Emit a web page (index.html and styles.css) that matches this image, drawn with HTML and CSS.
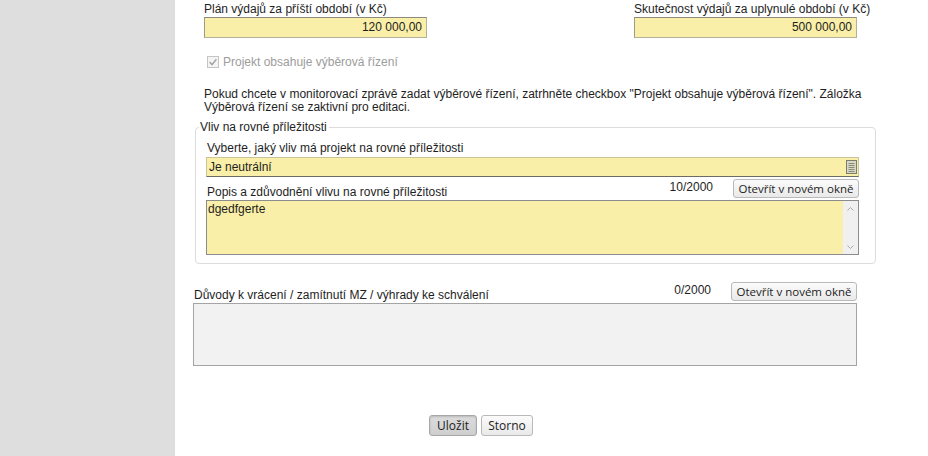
FILE: index.html
```html
<!DOCTYPE html>
<html lang="cs">
<head>
<meta charset="utf-8">
<title>Monitorovací zpráva</title>
<link rel="stylesheet" href="styles.css">
</head>
<body>
<div class="page">
  <aside class="side"></aside>
  <main class="main">
    <div class="top-row">
      <div class="field">
        <div class="lbl">Plán výdajů za příští období (v Kč)</div>
        <div class="money">120 000,00</div>
      </div>
      <div class="field">
        <div class="lbl">Skutečnost výdajů za uplynulé období (v Kč)</div>
        <div class="money">500 000,00</div>
      </div>
    </div>

    <div class="check">
      <span class="box"><svg width="12" height="12" viewBox="0 0 12 12"><rect x="0.5" y="0.5" width="11" height="11" fill="#f4f4f4" stroke="#c4c4c4"/><path d="M2.6 6.1 L5 8.6 L9.4 3.2" fill="none" stroke="#a2a2a2" stroke-width="1.4"/></svg></span>
      <span class="check-lbl">Projekt obsahuje výběrová řízení</span>
    </div>

    <p class="note">Pokud chcete v monitorovací zprávě zadat výběrové řízení, zatrhněte checkbox "Projekt obsahuje výběrová řízení". Záložka Výběrová řízení se zaktivní pro editaci.</p>

    <fieldset class="group">
      <legend>Vliv na rovné příležitosti</legend>
      <div class="lbl in">Vyberte, jaký vliv má projekt na rovné příležitosti</div>
      <div class="select">
        <span>Je neutrální</span>
        <svg class="sel-ico" width="11" height="14" viewBox="0 0 11 14"><rect x="0.5" y="0.5" width="10" height="13" fill="#d8d8c8" stroke="#7d7d6a"/><path d="M2.5 3.5h6M2.5 5.5h6M2.5 7.5h6M2.5 9.5h6M2.5 11.5h6" stroke="#8a8a78" stroke-width="1"/></svg>
      </div>
      <div class="lbl-row">
        <span class="row-lbl">Popis a zdůvodnění vlivu na rovné příležitosti</span>
        <span class="count">10/2000</span>
        <button class="btn open">Otevřít v novém okně</button>
      </div>
      <div class="area yellow">
        <span class="area-text">dgedfgerte</span>
        <div class="scroll">
          <svg width="7" height="4" viewBox="0 0 7 4"><path d="M0.5 3.5 L3.5 0.5 L6.5 3.5" fill="none" stroke="#a8a8a8"/></svg>
          <svg width="7" height="4" viewBox="0 0 7 4"><path d="M0.5 0.5 L3.5 3.5 L6.5 0.5" fill="none" stroke="#a8a8a8"/></svg>
        </div>
      </div>
    </fieldset>

    <div class="lbl-row outer">
      <span class="row-lbl">Důvody k vrácení / zamítnutí MZ / výhrady ke schválení</span>
      <span class="count">0/2000</span>
      <button class="btn open">Otevřít v novém okně</button>
    </div>
    <div class="area gray"></div>

    <div class="actions">
      <button class="btn act pressed">Uložit</button>
      <button class="btn act">Storno</button>
    </div>
  </main>
</div>
</body>
</html>
```

FILE: styles.css
```css
html, body {
  margin: 0;
  padding: 0;
  background: #ffffff;
}

body {
  font-family: "Liberation Sans", Arial, sans-serif;
  font-size: 12px;
  color: #1e1e1e;
}

.page {
  display: flex;
  width: 928px;
  height: 456px;
  overflow: hidden;
}

.side {
  width: 175px;
  flex: none;
  background: #dedede;
}

.main {
  flex: none;
  width: 664px;
  padding: 2px 0 0 18px;
}

.top-row {
  display: flex;
  justify-content: space-between;
  padding-left: 11px;
}

.field {
  width: 223px;
}

.lbl {
  line-height: 15px;
  white-space: nowrap;
}

.money {
  box-sizing: border-box;
  height: 21px;
  background: #f9efa8;
  border: 1px solid #b4b09a;
  border-top-color: #8c8a7c;
  border-left-color: #9c9a8a;
  text-align: right;
  padding: 0 4px;
  line-height: 19px;
  font-size: 12px;
}

.check {
  display: flex;
  align-items: center;
  height: 16px;
  margin-top: 16px;
  padding-left: 14px;
}

.box {
  display: flex;
  width: 12px;
  height: 12px;
}

.check-lbl {
  margin-left: 4px;
  color: #9c9c9c;
  line-height: 16px;
}

.note {
  margin: 18px 0 0 11px;
  line-height: 13px;
  width: 670px;
}

.group {
  margin: 6px 0 0 2px;
  width: 653px;
  padding: 7px 16px 8px 10px;
  border: 1px solid #dcdcdc;
  border-radius: 4px;
}

.group legend {
  padding: 0 2px 0 1px;
  margin-left: -7px;
  line-height: 14px;
  color: #222;
}

.lbl.in {
  padding-left: 1px;
}

.select {
  box-sizing: border-box;
  display: flex;
  align-items: center;
  justify-content: space-between;
  height: 20px;
  margin-top: 1px;
  background: #f9efa8;
  border: 1px solid #c9c49c;
  border-bottom-color: #6e6c60;
  padding: 0 1px 0 2px;
}

.sel-ico {
  display: block;
}

.lbl-row {
  display: flex;
  align-items: flex-start;
  height: 20px;
  margin-top: 2px;
}

.row-lbl {
  flex: 1;
  align-self: flex-end;
  line-height: 14px;
  padding-left: 1px;
  white-space: nowrap;
}

.count {
  line-height: 15px;
  margin-top: 1px;
  margin-right: 20px;
}

.btn {
  font-family: "Open Sans", "Segoe UI", sans-serif;
  font-size: 11.5px;
  color: #222;
  box-sizing: border-box;
  border: 1px solid #b9b9b9;
  border-radius: 3px;
  background: linear-gradient(#fbfbfb, #e9e9e9);
  padding: 0;
  margin: 0;
  cursor: pointer;
}

.btn.open {
  width: 126px;
  height: 19px;
  line-height: 16px;
}

.area {
  box-sizing: border-box;
  margin-top: 1px;
  border: 1px solid #8c8c8c;
}

.area.yellow {
  display: flex;
  height: 55px;
  background: #f9efa8;
}

.area-text {
  flex: 1;
  padding: 1px 0 0 1px;
  line-height: 14px;
}

.scroll {
  width: 15px;
  background: #f0f0f0;
  display: flex;
  flex-direction: column;
  align-items: center;
  justify-content: space-between;
  padding: 6px 0 5px;
}

.scroll svg {
  display: block;
}

.lbl-row.outer {
  margin-top: 18px;
  width: 664px;
}

.lbl-row.outer .count {
  margin-right: 20px;
}

.area.gray {
  height: 63px;
  width: 664px;
  background: #f2f2f2;
  border-color: #a4a4a4;
}

.actions {
  display: flex;
  gap: 4px;
  margin: 49px 0 0 236px;
}

.btn.act {
  height: 21px;
  line-height: 18px;
  font-size: 12px;
}

.btn.act:first-child {
  width: 48px;
}

.btn.act:last-child {
  width: 52px;
}

.btn.pressed {
  background: linear-gradient(#dcdcdc, #cfcfcf);
  border-color: #a8a8a8;
  box-shadow: inset 0 1px 2px rgba(0, 0, 0, 0.15);
}
```
